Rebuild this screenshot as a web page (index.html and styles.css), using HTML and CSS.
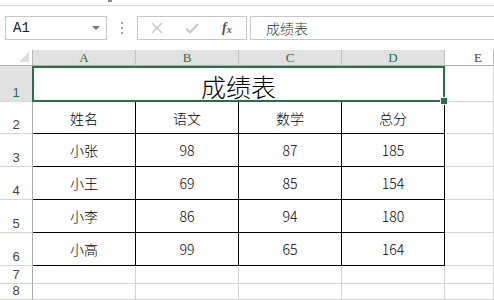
FILE: index.html
```html
<!DOCTYPE html>
<html lang="zh-CN">
<head>
    <meta charset="UTF-8">
    <title>成绩表</title>
    <link rel="stylesheet" href="styles.css">
</head>
<body>
    <div class="toolbar">
        <div class="top-strip"><span class="tab-mark"></span></div>
        <div class="bar">
            <div class="name-box">
                <span>A1</span>
                <span class="caret"></span>
            </div>
            <div class="grip"><i></i><i></i><i></i></div>
            <div class="fx-buttons">
                <svg class="icon" width="12" height="12" viewBox="0 0 12 12">
                    <path d="M1 1 L11 11 M11 1 L1 11" stroke="#c4c4c4" stroke-width="1.4" fill="none"/>
                </svg>
                <svg class="icon" width="14" height="11" viewBox="0 0 14 11">
                    <path d="M1 5.5 L5 9.5 L13 1" stroke="#c4c4c4" stroke-width="2" fill="none"/>
                </svg>
                <span class="fx">f<sub>x</sub></span>
            </div>
            <div class="formula">成绩表</div>
        </div>
    </div>

    <div class="sheet">
        <!-- 列标 -->
        <div class="c corner"><span class="tri"></span></div>
        <div class="c ch sel">A</div>
        <div class="c ch sel">B</div>
        <div class="c ch sel">C</div>
        <div class="c ch sel">D</div>
        <div class="c ch ch-last">E</div>

        <!-- 第1行 合并单元格 -->
        <div class="c rh sel">1</div>
        <div class="c title">成绩表<span class="handle"></span></div>
        <div class="c"></div>

        <div class="c rh">2</div>
        <div class="c d">姓名</div>
        <div class="c d">语文</div>
        <div class="c d">数学</div>
        <div class="c d">总分</div>
        <div class="c"></div>

        <div class="c rh">3</div>
        <div class="c d">小张</div>
        <div class="c d">98</div>
        <div class="c d">87</div>
        <div class="c d">185</div>
        <div class="c"></div>

        <div class="c rh">4</div>
        <div class="c d">小王</div>
        <div class="c d">69</div>
        <div class="c d">85</div>
        <div class="c d">154</div>
        <div class="c"></div>

        <div class="c rh">5</div>
        <div class="c d">小李</div>
        <div class="c d">86</div>
        <div class="c d">94</div>
        <div class="c d">180</div>
        <div class="c"></div>

        <div class="c rh">6</div>
        <div class="c d">小高</div>
        <div class="c d">99</div>
        <div class="c d">65</div>
        <div class="c d">164</div>
        <div class="c"></div>

        <div class="c rh">7</div>
        <div class="c"></div>
        <div class="c"></div>
        <div class="c"></div>
        <div class="c"></div>
        <div class="c"></div>

        <div class="c rh">8</div>
        <div class="c"></div>
        <div class="c"></div>
        <div class="c"></div>
        <div class="c"></div>
        <div class="c"></div>
    </div>
</body>
</html>
```

FILE: styles.css
```css
body {
    margin: 0;
    width: 494px;
    height: 300px;
    overflow: hidden;
    background-color: #fff;
    font-family: "Noto Sans CJK SC", sans-serif;
    font-weight: 300;
    color: #000;
}
.toolbar {
    height: 50px;
}
.top-strip {
    height: 5px;
    border-bottom: 1px solid #dadada;
    position: relative;
}
.tab-mark {
    position: absolute;
    left: 108px;
    top: 0;
    width: 4px;
    height: 2px;
    background-color: #8a8a8a;
}
.bar {
    display: flex;
    margin-top: 10px;
    height: 24px;
}
.name-box {
    box-sizing: border-box;
    margin-left: 5px;
    width: 102px;
    height: 24px;
    border: 1px solid #c6c6c6;
    display: flex;
    align-items: center;
    justify-content: space-between;
    padding: 0 6px 0 7px;
    font-family: "Liberation Mono", monospace;
    font-weight: normal;
    font-size: 14px;
    color: #222;
}
.caret {
    width: 0;
    height: 0;
    border-left: 4px solid transparent;
    border-right: 4px solid transparent;
    border-top: 4px solid #777;
}
.grip {
    width: 30px;
    display: flex;
    flex-direction: column;
    align-items: center;
    justify-content: center;
    gap: 3px;
}
.grip i {
    display: block;
    width: 2px;
    height: 2px;
    background-color: #a0a0a0;
}
.fx-buttons {
    box-sizing: border-box;
    width: 110px;
    height: 24px;
    border: 1px solid #c6c6c6;
    display: flex;
    align-items: center;
    padding-left: 13px;
}
.fx-buttons .icon {
    margin-right: 22px;
}
.fx-buttons .icon + .icon {
    margin-right: 23px;
}
.fx {
    font-family: "Liberation Serif", serif;
    font-style: italic;
    font-weight: bold;
    font-size: 14px;
    color: #555;
}
.fx sub {
    font-size: 10px;
    vertical-align: -1px;
}
.formula {
    box-sizing: border-box;
    margin-left: 3px;
    flex: 1;
    margin-right: -10px;
    height: 24px;
    border: 1px solid #c6c6c6;
    padding-left: 15px;
    display: flex;
    align-items: center;
    font-size: 14px;
    color: #333;
}

.sheet {
    display: grid;
    grid-template-columns: 33px 103px 103px 103px 103px 1fr;
    grid-template-rows: 16px 36px 32px 33px 33px 33px 33px 18px 16px;
}
.c {
    box-sizing: border-box;
    border-right: 1px solid #d4d4d4;
    border-bottom: 1px solid #d4d4d4;
    display: flex;
    align-items: center;
    justify-content: center;
    font-size: 14px;
}
.corner {
    border-right: 1px solid #b5b5b5;
    border-bottom: 1px solid #b5b5b5;
    position: relative;
}
.tri {
    position: absolute;
    right: 3px;
    bottom: 3px;
    width: 0;
    height: 0;
    border-left: 10px solid transparent;
    border-bottom: 10px solid #dcdcdc;
}
.ch {
    border-right: 1px solid #c0c0c0;
    border-bottom: 1px solid #ababab;
    font-family: "Liberation Serif", serif;
    font-weight: normal;
    font-size: 13px;
    color: #444;
}
.ch-last {
    padding-left: 18px;
}
.rh {
    border-right: 1px solid #ababab;
    align-items: flex-end;
    padding-bottom: 2px;
    font-family: "Liberation Sans", sans-serif;
    font-weight: normal;
    font-size: 13px;
    line-height: 13px;
    color: #444;
}
.sel {
    background-color: #e1e1e1;
    color: #217346;
}
.title {
    grid-column: span 4;
    border: 2px solid #217346;
    margin-left: -1px;
    position: relative;
    font-size: 25px;
    padding-top: 3px;
}
.handle {
    position: absolute;
    right: -5px;
    bottom: -5px;
    width: 6px;
    height: 6px;
    background-color: #217346;
    border: 1px solid #fff;
}
.d {
    border-right: 1px solid #000;
    border-bottom: 1px solid #000;
}
```
